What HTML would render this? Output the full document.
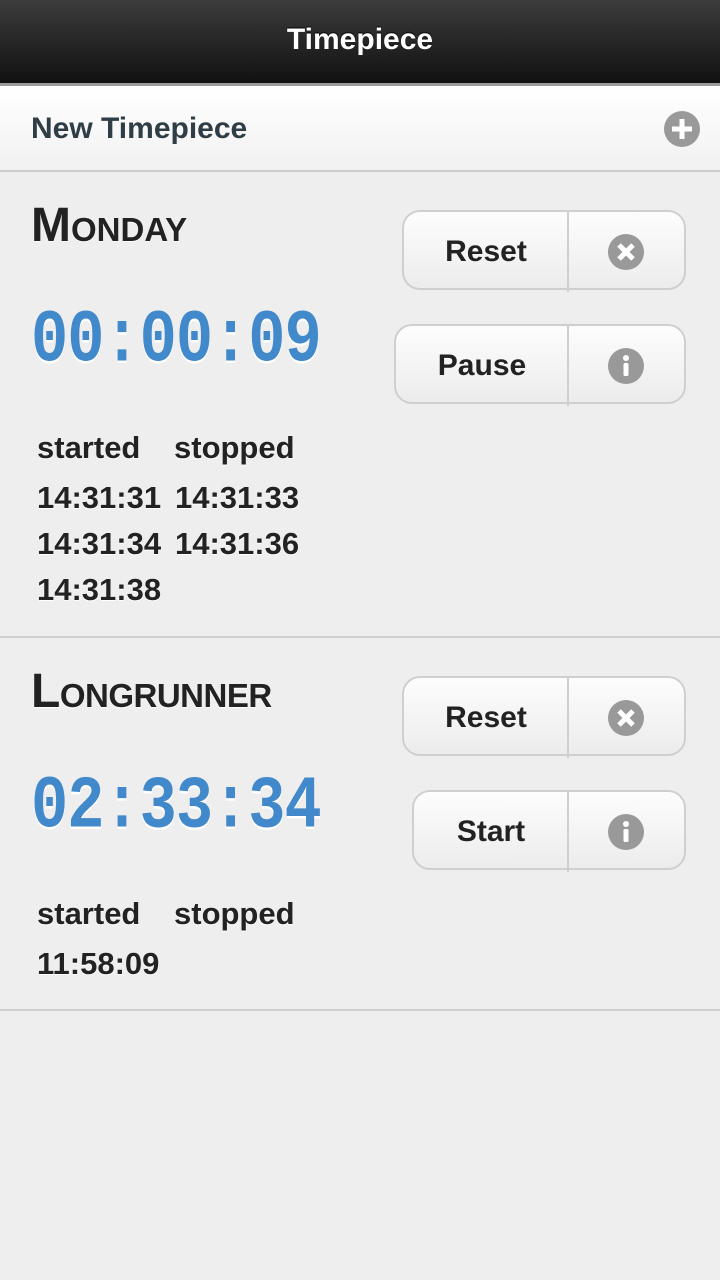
<!DOCTYPE html>
<html><head><meta charset="utf-8"><style>
body{margin:0;width:720px;height:1280px;background:#eeeeee;font-family:"Liberation Sans",sans-serif;position:relative;overflow:hidden}
.hdr{position:absolute;left:0;top:0;width:720px;height:83px;background:linear-gradient(#3c3c3c,#111);border-bottom:3px solid #9a9a9a;color:#fff;font-weight:bold;font-size:30px;text-align:center;line-height:80px;text-shadow:0 -1px 1px #000}
.nb{position:absolute;left:0;top:86px;width:720px;height:84px;background:linear-gradient(#fff,#f1f1f1);border-bottom:2px solid #ccc}
.nb span{position:absolute;left:31px;top:26px;font-size:30px;font-weight:bold;color:#2f3e46}
.plus{position:absolute;left:664px;top:111px}
.sec{position:absolute;left:0;width:720px;border-bottom:2px solid #cfcfcf}
.t{position:absolute;left:31px;font-weight:bold;color:#222;font-size:33px;text-shadow:0 1px 0 #fff}
.t b{font-size:48px}
.dig{position:absolute;left:31px;color:#4189cb;font-family:"Liberation Mono",monospace;font-weight:bold;font-size:62px;letter-spacing:-1px;transform:scaleY(1.2);transform-origin:left top;text-shadow:0 2px 0 #fff}
.tx{position:absolute;font-size:31px;font-weight:bold;color:#222;text-shadow:0 1px 0 #fff}
.btn{position:absolute;height:80px;border:2px solid #cfcfcf;border-radius:18px;background:linear-gradient(#fdfdfd,#ececec);box-sizing:border-box}
.btn .l{position:absolute;left:0;top:3px;bottom:0;font-size:30px;font-weight:bold;color:#222;display:flex;align-items:center;justify-content:center}
.btn .d{position:absolute;top:-2px;bottom:-4px;width:2px;background:#cfcfcf}
.btn svg{position:absolute;top:22px}
</style></head><body>
<div class="hdr">Timepiece</div>
<div class="nb"><span>New Timepiece</span></div>
<svg class="plus" width="36" height="36" viewBox="0 0 36 36"><circle cx="18" cy="18" r="18" fill="#999"/><path d="M18 8v20M8 18h20" stroke="#fff" stroke-width="5"/></svg>

<div class="sec" style="top:171px;height:465px"></div>
<div class="t" style="top:198px"><b>M</b>ONDAY</div>
<div class="dig" style="top:298px">00:00:09</div>
<div class="tx" style="left:37px;top:430px">started</div><div class="tx" style="left:174px;top:430px">stopped</div>
<div class="tx" style="left:37px;top:480px">14:31:31</div><div class="tx" style="left:175px;top:480px">14:31:33</div>
<div class="tx" style="left:37px;top:526px">14:31:34</div><div class="tx" style="left:175px;top:526px">14:31:36</div>
<div class="tx" style="left:37px;top:572px">14:31:38</div>

<div class="btn" style="left:402px;top:210px;width:284px"><div class="l" style="width:164px">Reset</div><div class="d" style="left:163px"></div>
<svg style="left:204px" width="36" height="36" viewBox="0 0 36 36"><circle cx="18" cy="18" r="18" fill="#999"/><path d="M11 11l14 14M25 11L11 25" stroke="#fff" stroke-width="5"/></svg></div>
<div class="btn" style="left:394px;top:324px;width:292px"><div class="l" style="width:172px">Pause</div><div class="d" style="left:171px"></div>
<svg style="left:212px" width="36" height="36" viewBox="0 0 36 36"><circle cx="18" cy="18" r="18" fill="#999"/><circle cx="18" cy="10" r="3" fill="#fff"/><rect x="15.5" y="15" width="5" height="13" rx="1.5" fill="#fff"/></svg></div>

<div class="sec" style="top:637px;height:372px"></div>
<div class="t" style="top:664px;letter-spacing:-0.5px"><b>L</b>ONGRUNNER</div>
<div class="dig" style="top:764px">02:33:34</div>
<div class="tx" style="left:37px;top:896px">started</div><div class="tx" style="left:174px;top:896px">stopped</div>
<div class="tx" style="left:37px;top:946px">11:58:09</div>

<div class="btn" style="left:402px;top:676px;width:284px"><div class="l" style="width:164px">Reset</div><div class="d" style="left:163px"></div>
<svg style="left:204px" width="36" height="36" viewBox="0 0 36 36"><circle cx="18" cy="18" r="18" fill="#999"/><path d="M11 11l14 14M25 11L11 25" stroke="#fff" stroke-width="5"/></svg></div>
<div class="btn" style="left:412px;top:790px;width:274px"><div class="l" style="width:154px">Start</div><div class="d" style="left:153px"></div>
<svg style="left:194px" width="36" height="36" viewBox="0 0 36 36"><circle cx="18" cy="18" r="18" fill="#999"/><circle cx="18" cy="10" r="3" fill="#fff"/><rect x="15.5" y="15" width="5" height="13" rx="1.5" fill="#fff"/></svg></div>
</body></html>
